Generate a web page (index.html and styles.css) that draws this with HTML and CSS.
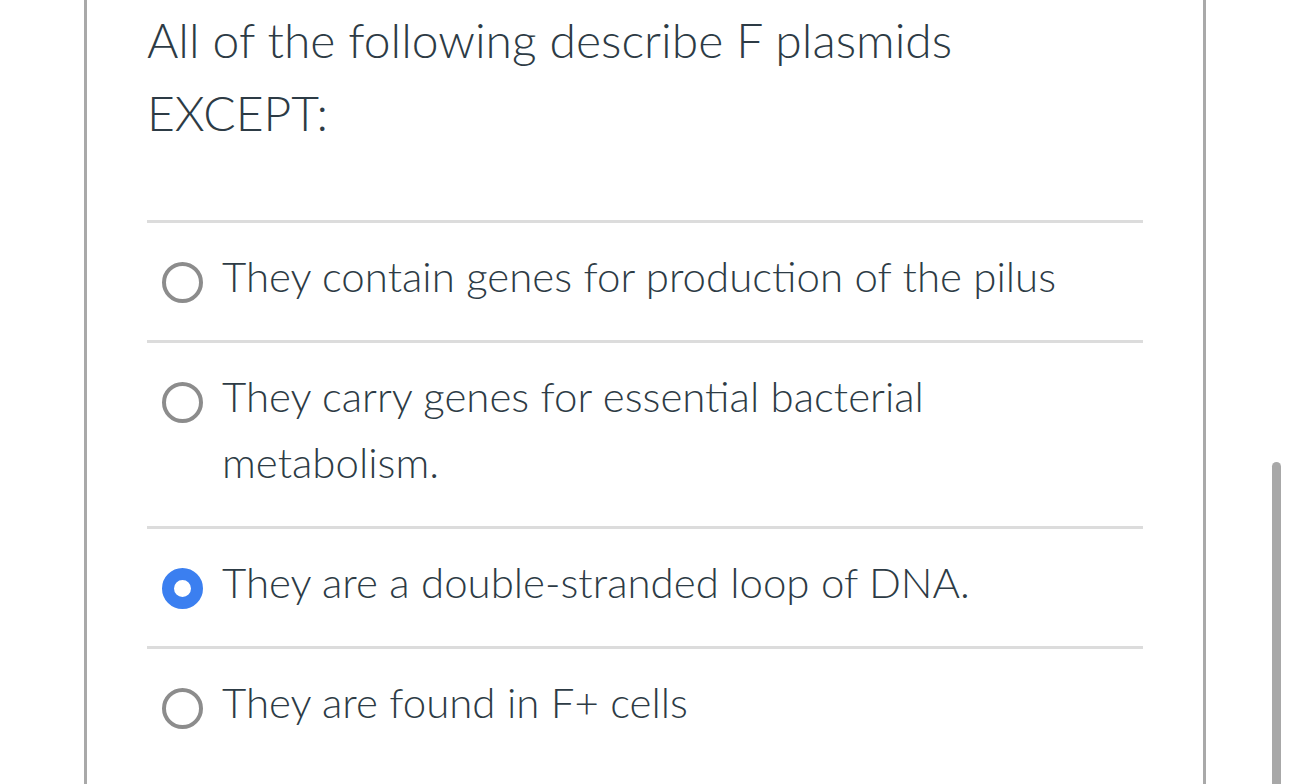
FILE: index.html
```html
<!DOCTYPE html>
<html lang="en">
<head>
<meta charset="utf-8">
<title>Quiz question</title>
<link rel="stylesheet" href="styles.css">
</head>
<body>
<div class="page">
  <div class="panel">
    <div class="question">All of the following describe F plasmids EXCEPT:</div>
    <div class="answers">
      <div class="answer">
        <span class="radio"></span>
        <span class="label">They contain genes for production of the pilus</span>
      </div>
      <div class="answer">
        <span class="radio"></span>
        <span class="label">They carry genes for essential bacterial metabolism.</span>
      </div>
      <div class="answer">
        <span class="radio checked"></span>
        <span class="label">They are a double-stranded loop of DNA.</span>
      </div>
      <div class="answer last">
        <span class="radio"></span>
        <span class="label">They are found in F+ cells</span>
      </div>
    </div>
  </div>
  <div class="scrollbar"></div>
</div>
</body>
</html>
```

FILE: styles.css
```css
html, body {
  margin: 0;
  padding: 0;
  background: #ffffff;
  height: 100%;
  overflow: hidden;
}
body {
  font-family: "Lato", "Noto Sans", sans-serif;
  font-weight: 300;
  color: #2d3b45;
}
.page {
  position: relative;
  height: 784px;
  overflow: hidden;
}
.panel {
  margin-left: 84px;
  width: 1122px;
  height: 784px;
  overflow: hidden;
  border-left: 3px solid #a9a9a9;
  border-right: 3px solid #a9a9a9;
  padding: 0 60px;
  box-sizing: border-box;
}
.question {
  font-size: 48px;
  line-height: 73px;
  padding-top: 3px;
  padding-right: 180px;
  padding-bottom: 71px;
  border-bottom: 3px solid #dcdcdc;
}
.answer {
  display: flex;
  align-items: flex-start;
  padding: 20px 0 31px 15px;
  border-bottom: 3px solid #dcdcdc;
}
.answer.last {
  border-bottom: none;
}
.radio {
  flex: none;
  width: 41px;
  height: 41px;
  box-sizing: border-box;
  border: 4px solid #8c8c8c;
  border-radius: 50%;
  margin-top: 19px;
  margin-right: 19px;
}
.radio.checked {
  border: 12px solid #3b7ff0;
  background: #ffffff;
}
.label {
  font-size: 42px;
  line-height: 66px;
  padding-right: 40px;
}
.scrollbar {
  position: absolute;
  left: 1272px;
  top: 462px;
  width: 9px;
  bottom: 0;
  background: #a8a8a8;
  border-radius: 5px 5px 0 0;
}
```
